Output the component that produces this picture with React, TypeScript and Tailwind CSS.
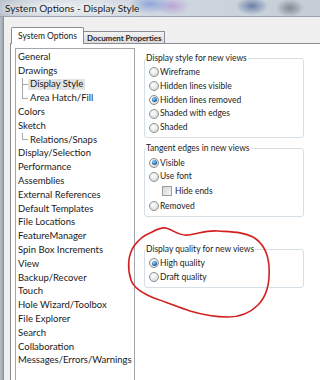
import React from "react";

const lato = { fontFamily: "Lato, 'Liberation Sans', sans-serif" };

type Item = { label: string; child?: boolean; last?: boolean; selected?: boolean };

const items: Item[] = [
  { label: "General" },
  { label: "Drawings" },
  { label: "Display Style", child: true, selected: true },
  { label: "Area Hatch/Fill", child: true, last: true },
  { label: "Colors" },
  { label: "Sketch" },
  { label: "Relations/Snaps", child: true, last: true },
  { label: "Display/Selection" },
  { label: "Performance" },
  { label: "Assemblies" },
  { label: "External References" },
  { label: "Default Templates" },
  { label: "File Locations" },
  { label: "FeatureManager" },
  { label: "Spin Box Increments" },
  { label: "View" },
  { label: "Backup/Recover" },
  { label: "Touch" },
  { label: "Hole Wizard/Toolbox" },
  { label: "File Explorer" },
  { label: "Search" },
  { label: "Collaboration" },
  { label: "Messages/Errors/Warnings" },
];

function TreeRow({ item }: { item: Item }) {
  if (!item.child) {
    return (
      <div className="h-[13.8px] flex items-center pl-[2px] text-[9.5px] text-[#1a1a1a] whitespace-nowrap">
        {item.label}
      </div>
    );
  }
  return (
    <div className="h-[13.8px] flex items-stretch text-[9.5px] text-[#1a1a1a] whitespace-nowrap">
      <span className="ml-[6px] w-[6px] flex flex-col">
        <span className="flex-1 border-l border-b border-[#a9a9a9]" />
        <span className={"flex-1 border-l " + (item.last ? "border-transparent" : "border-[#a9a9a9]")} />
      </span>
      <span className="flex items-center">
        <span className={"px-[2px] h-[11px] flex items-center " + (item.selected ? "bg-[#e3e3e3]" : "")}>
          {item.label}
        </span>
      </span>
    </div>
  );
}

function Radio({ label, checked }: { label: string; checked?: boolean }) {
  return (
    <div className="h-[13.8px] flex items-center">
      <span className="w-[10px] h-[10px] rounded-full border border-[#8d8f91] bg-[radial-gradient(circle_at_40%_35%,#ffffff,#e6e6e6_55%,#c9c9c9)] flex items-center justify-center">
        {checked && (
          <span className="w-[5px] h-[5px] rounded-full bg-[radial-gradient(circle_at_40%_35%,#9fdcff,#2a6fb8_55%,#123e78)]" />
        )}
      </span>
      <span className="ml-[1px] text-[8.5px] text-[#1c1c1c]">{label}</span>
    </div>
  );
}

function Group({ title, className, children }: { title: string; className?: string; children: React.ReactNode }) {
  return (
    <fieldset className={"w-[160px] border border-[#d5dfe5] rounded-[3px] p-0 " + (className ?? "")}>
      <legend className="ml-[1px] pr-[1px] text-[8.5px] leading-[11px] text-[#1c1c1c]">{title}</legend>
      <div className="pl-[4px] pt-[1.5px] pb-[3px]">{children}</div>
    </fieldset>
  );
}

export default function App() {
  return (
    <div className="w-[320px] h-[380px] overflow-hidden relative flex flex-col bg-[#f0f0f0]" style={lato}>
      {/* blurred glass title bar */}
      <div className="h-[17px] shrink-0 flex items-center pl-[5px] border-b border-[#9aa3ad] bg-[radial-gradient(ellipse_22px_10px_at_150px_4px,#8fa6d8,transparent),radial-gradient(ellipse_18px_9px_at_172px_6px,#b9a6d6,transparent),radial-gradient(ellipse_16px_9px_at_252px_6px,#6a7fa8,transparent),radial-gradient(ellipse_14px_9px_at_290px_8px,#7f8894,transparent),radial-gradient(ellipse_70px_14px_at_60px_8px,#eef1f4,transparent),linear-gradient(90deg,#b9c2cc,#d6dce3_30%,#cdd5de_60%,#c4ccd6)]">
        <span className="text-[10px] text-[#1b1b1b] [text-shadow:0_0_6px_#ffffff]">System Options - Display Style</span>
      </div>

      <div className="flex-1 flex min-h-0">
        <div className="w-[4px] shrink-0 bg-[linear-gradient(90deg,#b7bec6,#9ca6b0)] border-r border-[#8a939c]" />
        <div className="flex-1 flex flex-col pt-[9px] min-w-0">
          {/* tabs */}
          <div className="flex items-end ml-[7px] h-[17px] shrink-0">
            <div className="relative z-10 -mb-px h-[17px] bg-white border border-b-0 border-[#898c95] rounded-t-[2px] px-[6px] flex items-center text-[8.5px] text-[#1a1a1a]">
              System Options
            </div>
            <div className="h-[12px] border-t border-r border-[#898c95] bg-[linear-gradient(#f2f2f2,#dcdcdc)] px-[3px] flex items-center text-[8px] font-bold text-[#2a2a2a] tracking-[-0.1px]">
              Document Properties
            </div>
          </div>

          {/* panel */}
          <div className="flex-1 ml-[6px] bg-white border-t border-l border-[#898c95] flex pl-[4px] pt-[4px]">
            <div className="w-[120px] h-[340px] border border-[#a3a6ac] pt-[1px] shrink-0">
              {items.map((it) => (
                <TreeRow key={it.label} item={it} />
              ))}
            </div>

            <div className="ml-[9px] pt-[5px] flex flex-col">
              <Group title="Display style for new views">
                <Radio label="Wireframe" />
                <Radio label="Hidden lines visible" />
                <Radio label="Hidden lines removed" checked />
                <Radio label="Shaded with edges" />
                <Radio label="Shaded" />
              </Group>

              <Group title="Tangent edges in new views" className="mt-[5px]">
                <Radio label="Visible" checked />
                <Radio label="Use font" />
                <div className="h-[15.5px] flex items-center pl-[13px]">
                  <span className="w-[10px] h-[10px] border border-[#9a9c9e] bg-[linear-gradient(135deg,#d8d8d8,#f4f4f4)]" />
                  <span className="ml-[3px] text-[8.5px] text-[#1c1c1c]">Hide ends</span>
                </div>
                <Radio label="Removed" />
              </Group>

              <Group title="Display quality for new views" className="mt-[27px]">
                <Radio label="High quality" checked />
                <Radio label="Draft quality" />
              </Group>
            </div>
          </div>
        </div>
      </div>

      {/* hand-drawn red annotation */}
      <svg className="absolute inset-0 pointer-events-none" width="320" height="380" viewBox="0 0 320 380">
        <path
          d="M 150 233 C 156 230 160 227 166 228 C 174 230 178 236 188 235 C 198 234 206 230 218 231 C 232 232 244 232 253 237 C 263 243 268 253 269 266 C 270 281 267 296 258 305 C 250 313 240 317 228 317 C 214 317 200 314 190 311 C 178 307 166 302 154 298 C 144 294 134 289 131 280 C 127 268 128 255 134 246 C 139 239 145 235 150 233"
          fill="none"
          stroke="#d41f1f"
          strokeWidth="1.6"
          strokeLinecap="round"
        />
      </svg>
    </div>
  );
}
